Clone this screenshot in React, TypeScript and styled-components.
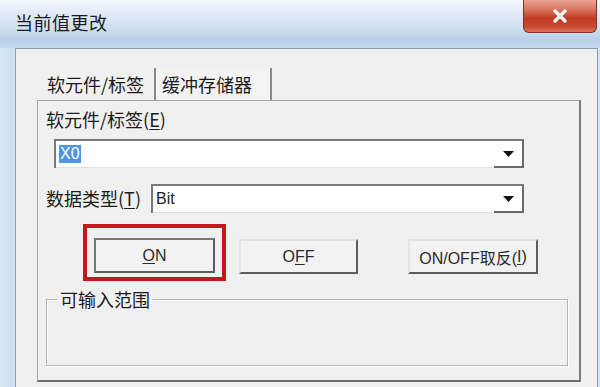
import styled, { createGlobalStyle } from "styled-components";

const GlobalStyle = createGlobalStyle`
  body {
    margin: 0;
    background: #ffffff;
  }
`;

const Window = styled.div`
  width: 600px;
  height: 387px;
  overflow: hidden;
  display: flex;
  flex-direction: column;
  background: linear-gradient(90deg, #dbe8f5 0px, #c9ddf1 12px, #d4e4f4 15px);
  font-family: "Noto Sans CJK SC", "Liberation Sans", sans-serif;
  color: #1c1c1c;
`;

const TitleBar = styled.div`
  height: 48px;
  flex: none;
  display: flex;
  align-items: flex-start;
  justify-content: space-between;
  padding-left: 15px;
  background: linear-gradient(180deg, #f4f8fc 0px, #e0eaf6 14px, #cfdff1 28px, #b8cfe8 40px, #c4d8ed 48px);
`;

const Title = styled.div`
  margin-top: 11px;
  font-size: 18px;
  line-height: 22px;
  color: #1a1a1a;
  letter-spacing: 0.5px;
`;

const CloseButton = styled.div`
  width: 74px;
  height: 33px;
  margin-right: 3px;
  box-sizing: border-box;
  border: 1px solid #7d3326;
  border-top: none;
  border-radius: 0 0 6px 6px;
  background: linear-gradient(180deg, #e6a493 0px, #d8735c 10px, #c23c24 18px, #c8462e 26px, #dc7a5e 33px);
  display: flex;
  align-items: center;
  justify-content: center;
`;

const Body = styled.div`
  flex: 1;
  margin: 0 2px 0 15px;
  background: #f0f0f0;
  border: 1px solid #8c9cb0;
  border-bottom: none;
  padding: 19px 0 0 21px;
  display: flex;
  flex-direction: column;
`;

const TabStrip = styled.div`
  height: 32px;
  display: flex;
  align-items: stretch;
`;

const Tab = styled.div<{ $active?: boolean }>`
  display: flex;
  align-items: center;
  padding: ${(p) => (p.$active ? "0 10px 0 10px" : "0 18px 0 6px")};
  font-size: 18px;
  color: #1c1c1c;
  border-right: 2px solid #8a8a8a;
  background: ${(p) => (p.$active ? "#f0f0f0" : "#f3f3f3")};
`;

const TabPanel = styled.div`
  width: 544px;
  height: 282px;
  box-sizing: border-box;
  border: 1px solid #a6a6a6;
  border-right: 2px solid #7c7c7c;
  border-bottom: 2px solid #6e6e6e;
  display: flex;
  flex-direction: column;
  padding: 8px 0 0 8px;
`;

const FieldLabel = styled.div`
  font-size: 18px;
  line-height: 21px;
  white-space: nowrap;
`;

const Key = styled.span`
  text-decoration: underline;
  text-underline-offset: 2px;
`;

const Row = styled.div`
  display: flex;
  align-items: center;
  margin-top: 16px;
`;

const Combo = styled.div<{ $width: number }>`
  width: ${(p) => p.$width}px;
  height: 29px;
  box-sizing: border-box;
  display: flex;
  align-items: stretch;
  background: #ffffff;
  border-top: 2px solid #7a7a7a;
  border-left: 2px solid #7a7a7a;
  border-right: 2px solid #6a6a6a;
`;

const ComboText = styled.div`
  flex: 1;
  display: flex;
  align-items: center;
  padding-left: 3px;
  font-family: "Liberation Sans", "Noto Sans CJK SC", sans-serif;
  font-size: 16px;
  border-bottom: 1px solid #e2e2e2;
`;

const Selected = styled.span`
  background: #4e95e2;
  color: #ffffff;
  padding: 0 1px;
  line-height: 18px;
`;

const DropButton = styled.div`
  width: 28px;
  display: flex;
  align-items: center;
  justify-content: center;
  border-bottom: 2px solid #6a6a6a;
`;

const ButtonRow = styled.div`
  display: flex;
  align-items: flex-start;
  margin-top: 11px;
  margin-left: 37px;
`;

const Highlight = styled.div`
  width: 143px;
  height: 57px;
  box-sizing: border-box;
  border: 4px solid #c8161d;
  padding: 10px 0 0 7px;
`;

const Button = styled.div<{ $width: number; $focused?: boolean; $gap: number }>`
  width: ${(p) => p.$width}px;
  height: 35px;
  box-sizing: border-box;
  margin-left: ${(p) => p.$gap}px;
  margin-top: ${(p) => (p.$focused ? 0 : 15)}px;
  display: flex;
  align-items: center;
  justify-content: center;
  background: #f2f2f2;
  font-family: "Liberation Sans", "Noto Sans CJK SC", sans-serif;
  font-size: 16px;
  color: #2a2a2a;
  white-space: nowrap;
  border: 2px solid ${(p) => (p.$focused ? "#777777" : "#e4e4e4")};
  border-right-color: #5e5e5e;
  border-bottom-color: #5e5e5e;
`;

const GroupBox = styled.fieldset`
  width: 522px;
  height: 76px;
  box-sizing: border-box;
  margin: 9px 0 0 0;
  padding: 0;
  border: 1px solid #b4b4b4;
  box-shadow: inset 1px 1px 0 #ffffff, 1px 1px 0 #ffffff;
`;

const Legend = styled.legend`
  margin-left: 11px;
  padding: 0 2px;
  font-size: 18px;
  line-height: 18px;
  color: #1c1c1c;
`;

function Arrow() {
  return (
    <svg width="11" height="6" viewBox="0 0 11 6">
      <path d="M0 0 H11 L5.5 6 Z" fill="#111111" />
    </svg>
  );
}

export default function App() {
  return (
    <>
      <GlobalStyle />
      <Window>
        <TitleBar>
          <Title>当前值更改</Title>
          <CloseButton>
            <svg width="16" height="14" viewBox="0 0 16 14">
              <path
                d="M3 2 L13 12 M13 2 L3 12"
                stroke="#ffffff"
                strokeWidth="3.2"
                strokeLinecap="round"
              />
            </svg>
          </CloseButton>
        </TitleBar>
        <Body>
          <TabStrip>
            <Tab $active>软元件/标签</Tab>
            <Tab>缓冲存储器</Tab>
          </TabStrip>
          <TabPanel>
            <FieldLabel>
              软元件/标签(<Key>E</Key>)
            </FieldLabel>
            <Row style={{ marginTop: 9, marginLeft: 8 }}>
              <Combo $width={470}>
                <ComboText>
                  <Selected>X0</Selected>
                </ComboText>
                <DropButton>
                  <Arrow />
                </DropButton>
              </Combo>
            </Row>
            <Row>
              <FieldLabel style={{ width: 105 }}>
                数据类型(<Key>T</Key>)
              </FieldLabel>
              <Combo $width={373}>
                <ComboText>Bit</ComboText>
                <DropButton>
                  <Arrow />
                </DropButton>
              </Combo>
            </Row>
            <ButtonRow>
              <Highlight>
                <Button $width={121} $gap={0} $focused>
                  <Key>O</Key>N
                </Button>
              </Highlight>
              <Button $width={119} $gap={13}>
                O<Key>F</Key>F
              </Button>
              <Button $width={130} $gap={50}>
                ON/OFF取反(<Key>I</Key>)
              </Button>
            </ButtonRow>
            <GroupBox>
              <Legend>可输入范围</Legend>
            </GroupBox>
          </TabPanel>
        </Body>
      </Window>
    </>
  );
}
